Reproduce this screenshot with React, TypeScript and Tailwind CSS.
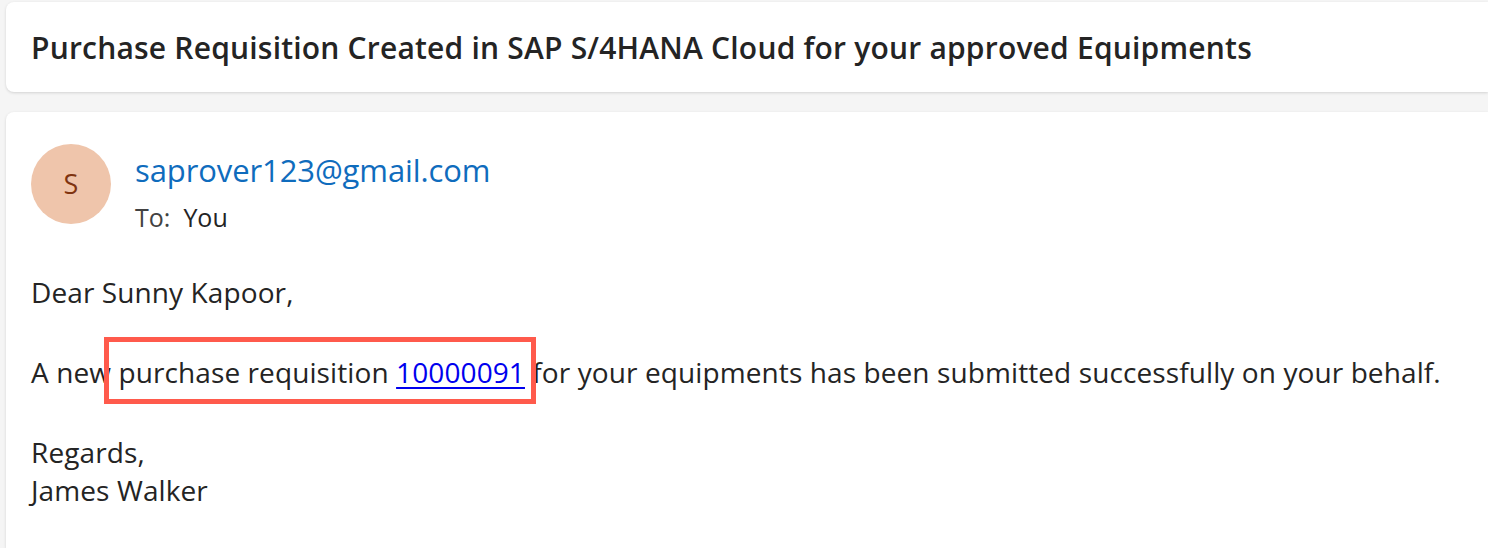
const font = { fontFamily: '"Open Sans", "Noto Sans", sans-serif' };

function Avatar() {
  return (
    <div className="flex h-20 w-20 shrink-0 items-center justify-center rounded-full bg-[#efc5ab] text-[27px] text-[#7f3410]">
      S
    </div>
  );
}

export default function App() {
  return (
    <div className="flex h-[548px] w-[1488px] flex-col overflow-hidden bg-[#f5f5f5] pl-[6px] pt-[2px]" style={font}>
      <header className="flex h-[90px] shrink-0 items-center rounded-l-lg bg-white pl-[25px] shadow-[0_1px_3px_rgba(0,0,0,0.14)]">
        <h1 className="text-[30px] font-semibold tracking-[0.2px] text-[#242424]">
          Purchase Requisition Created in SAP S/4HANA Cloud for your approved Equipments
        </h1>
      </header>

      <main className="mt-5 flex-1 rounded-tl-lg bg-white pl-[25px] pt-[32px] shadow-[0_1px_3px_rgba(0,0,0,0.14)]">
        <div className="flex items-start gap-[24px]">
          <Avatar />
          <div className="pt-[6px]">
            <div className="text-[31px] leading-[40px] tracking-[-0.1px] text-[#0f6cbd]">saprover123@gmail.com</div>
            <div className="mt-[11px] text-[25px] leading-[32px] text-[#242424]">
              <span className="text-[#424242]">To:</span>&nbsp; You
            </div>
          </div>
        </div>

        <div className="mt-[40px] text-[28px] leading-[38px] tracking-[0.1px] text-[#242424]">
          <p>Dear Sunny Kapoor,</p>
          <p className="mt-[42px]">
            A new{' '}
            <span className="relative">
              purchase requisition{' '}
              <a href="#" className="text-[#0000ee] underline decoration-2 underline-offset-[4px]">10000091</a>
              <span className="pointer-events-none absolute -top-[16px] -bottom-[13px] -left-[14px] -right-[11px] border-[5px] border-[#ff5a4c]" />
            </span>{' '}
            for your equipments has been submitted successfully on your behalf.
          </p>
          <p className="mt-[42px]">
            Regards,
            <br />
            James Walker
          </p>
        </div>
      </main>
    </div>
  );
}
